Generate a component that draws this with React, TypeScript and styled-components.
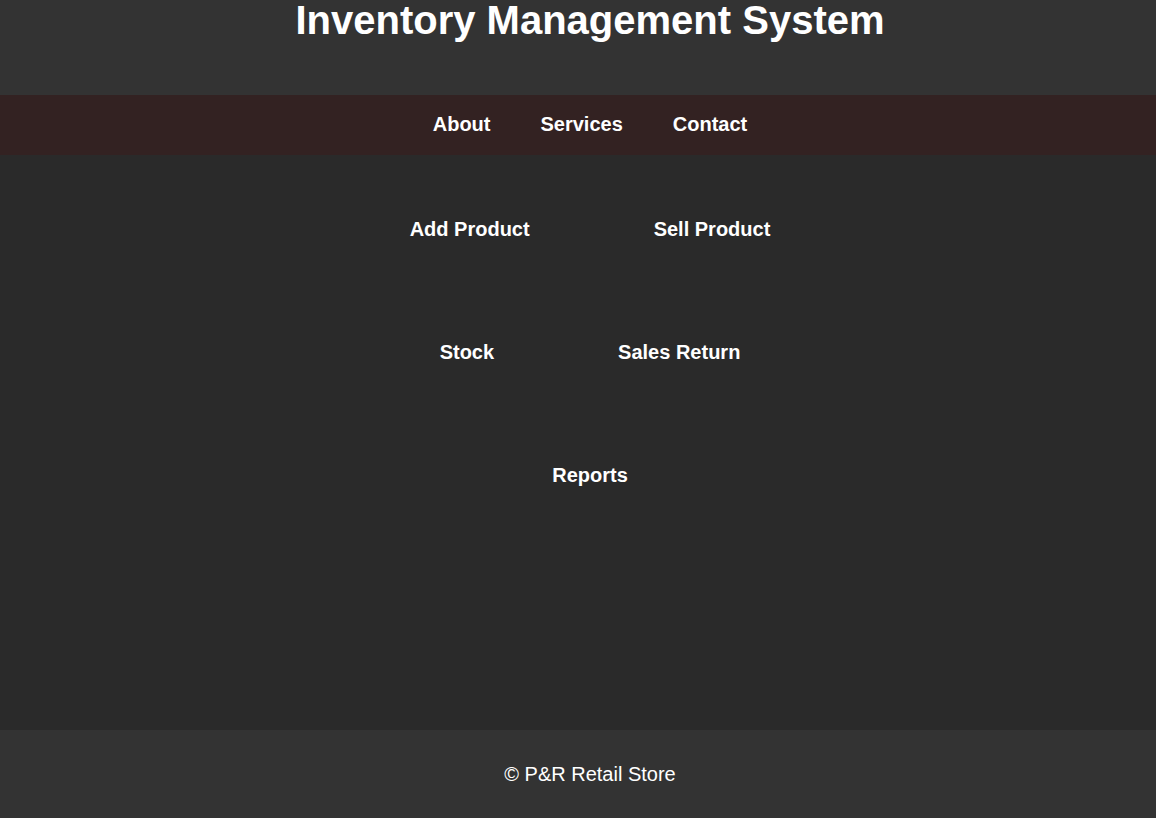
import React from "react";
import styled, { createGlobalStyle } from "styled-components";

const GlobalStyle = createGlobalStyle`
  html, body {
    margin: 0;
    padding: 0;
    background: #2a2a2a;
  }
  body {
    font-family: "Liberation Sans", Arial, sans-serif;
    color: #ffffff;
  }
  * { box-sizing: border-box; }
`;

const Header = styled.header`
  background: #333333;
  height: 95px;
  padding-left: 24px;
`;

const Title = styled.h1`
  margin: 0;
  font-size: 40px;
  line-height: 40px;
  font-weight: 700;
  text-align: center;
  color: #ffffff;
`;

const Nav = styled.nav`
  background: #332222;
  height: 60px;
  padding: 0 0 2px 24px;
  display: flex;
  align-items: center;
  justify-content: center;
`;

const NavList = styled.ul`
  list-style: none;
  margin: 0;
  padding: 0;
  display: flex;
  gap: 50px;
`;

const NavLink = styled.a`
  color: #ffffff;
  text-decoration: none;
  font-size: 20px;
  font-weight: 700;
  line-height: 23px;
`;

const Main = styled.main`
  background: #2a2a2a;
  height: 575px;
  padding: 63px 0 0 24px;
  display: flex;
  flex-direction: column;
  gap: 100px;
`;

const Row = styled.div`
  display: flex;
  justify-content: center;
  gap: 124px;
`;

const Action = styled.a`
  color: #ffffff;
  text-decoration: none;
  font-size: 20px;
  font-weight: 700;
  line-height: 23px;
`;

const Footer = styled.footer`
  background: #333333;
  height: 88px;
  padding: 33px 0 0 24px;
  text-align: center;
  font-size: 20px;
  line-height: 23px;
`;

export default function App() {
  return (
    <>
      <GlobalStyle />
      <Header>
        <Title>Inventory Management System</Title>
      </Header>
      <Nav>
        <NavList>
          <li><NavLink href="#">About</NavLink></li>
          <li><NavLink href="#">Services</NavLink></li>
          <li><NavLink href="#">Contact</NavLink></li>
        </NavList>
      </Nav>
      <Main>
        <Row>
          <Action href="#">Add Product</Action>
          <Action href="#">Sell Product</Action>
        </Row>
        <Row>
          <Action href="#">Stock</Action>
          <Action href="#">Sales Return</Action>
        </Row>
        <Row>
          <Action href="#">Reports</Action>
        </Row>
      </Main>
      <Footer>© P&amp;R Retail Store</Footer>
    </>
  );
}
